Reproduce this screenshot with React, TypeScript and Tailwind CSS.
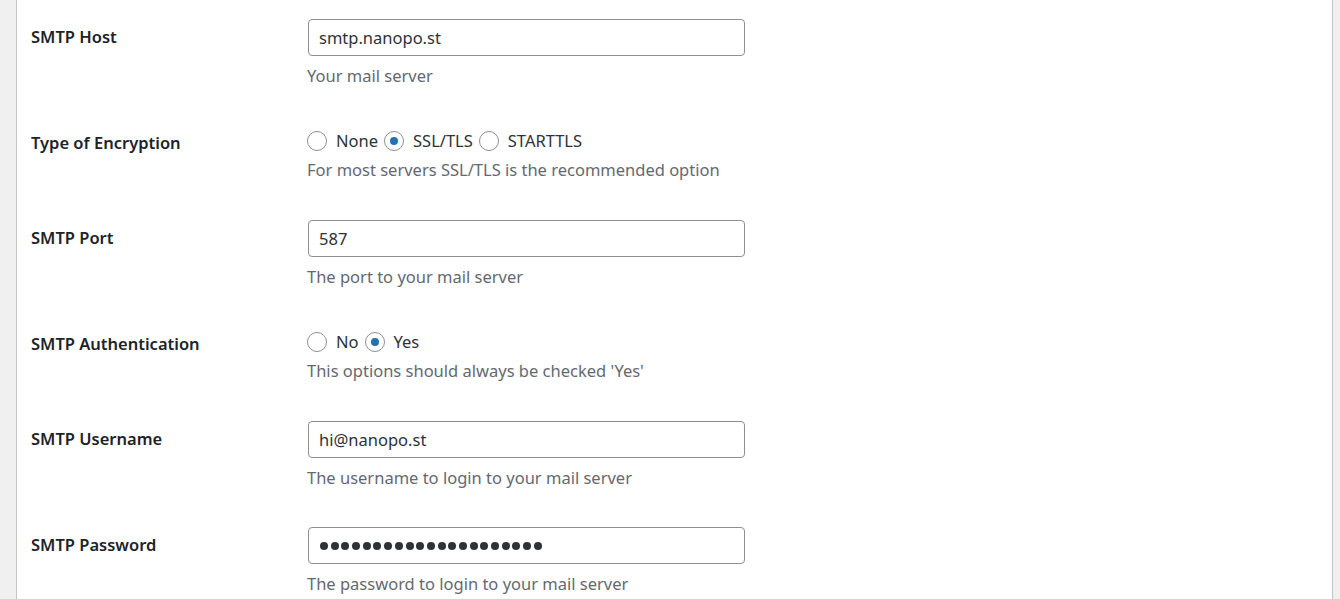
import React from 'react';

type Field =
    | { kind: 'input'; label: string; value: string; help: string; password?: boolean }
    | { kind: 'radio'; label: string; name: string; options: string[]; checked: string; help: string };

const fields: Field[] = [
    { kind: 'input', label: 'SMTP Host', value: 'smtp.nanopo.st', help: 'Your mail server' },
    { kind: 'radio', label: 'Type of Encryption', name: 'encryption', options: ['None', 'SSL/TLS', 'STARTTLS'], checked: 'SSL/TLS', help: 'For most servers SSL/TLS is the recommended option' },
    { kind: 'input', label: 'SMTP Port', value: '587', help: 'The port to your mail server' },
    { kind: 'radio', label: 'SMTP Authentication', name: 'auth', options: ['No', 'Yes'], checked: 'Yes', help: "This options should always be checked 'Yes'" },
    { kind: 'input', label: 'SMTP Username', value: 'hi@nanopo.st', help: 'The username to login to your mail server' },
    { kind: 'input', label: 'SMTP Password', value: '', help: 'The password to login to your mail server', password: true },
];

const Radio = ({ checked }: { checked: boolean }) => (
    <span className="inline-flex w-[20px] h-[20px] shrink-0 items-center justify-center rounded-full border border-[#8c8f94] bg-white">
        {checked && <span className="w-[8px] h-[8px] rounded-full bg-[#2271b1]"></span>}
    </span>
);

const PasswordBox = () => (
    <div className="ml-[1px] flex items-center gap-[2.7px] w-[437px] h-[37px] px-[11px] rounded-[4px] border border-[#8c8f94] bg-white">
        {Array.from({ length: 21 }).map((_, i) => (
            <span key={i} className="w-[8px] h-[8px] rounded-full bg-[#2c3338]"></span>
        ))}
    </div>
);

const App = () => {
    return (
        <div className="min-h-[599px] bg-[#f0f0f1] pl-[16px] pr-[7px] font-['Noto_Sans',sans-serif]">
            <div className="min-h-[599px] bg-white border-x border-[#c3c4c7] pl-[14px]">
                {fields.map((f) => (
                    <div key={f.label} className="flex">
                        {/* Label column */}
                        <div className="w-[276px] shrink-0 pt-[25px] text-[16.5px] leading-[24px] font-semibold text-[#1d2327]">
                            {f.label}
                        </div>

                        {/* Field column */}
                        {f.kind === 'input' ? (
                            <div className="pt-[19px] pb-[18px]">
                                {f.password ? (
                                    <PasswordBox />
                                ) : (
                                    <input
                                        type="text"
                                        defaultValue={f.value}
                                        readOnly
                                        className="ml-[1px] block w-[437px] h-[37px] px-[10px] rounded-[4px] border border-[#8c8f94] bg-white text-[16.5px] text-[#2c3338] focus:outline-none"
                                    />
                                )}
                                <p className="mt-[8px] text-[16.5px] leading-[24px] text-[#646970]">{f.help}</p>
                            </div>
                        ) : (
                            <div className="pt-[19px] pb-[19px]">
                                <div className="flex items-center h-[32px] text-[16.5px] text-[#2c3338]">
                                    {f.options.map((o) => (
                                        <label key={o} className="flex items-center gap-[9px] mr-[6px]">
                                            <Radio checked={o === f.checked} />
                                            {o}
                                        </label>
                                    ))}
                                </div>
                                <p className="mt-[1px] text-[16.5px] leading-[24px] text-[#646970]">{f.help}</p>
                            </div>
                        )}
                    </div>
                ))}
            </div>
        </div>
    );
};

export default App;
